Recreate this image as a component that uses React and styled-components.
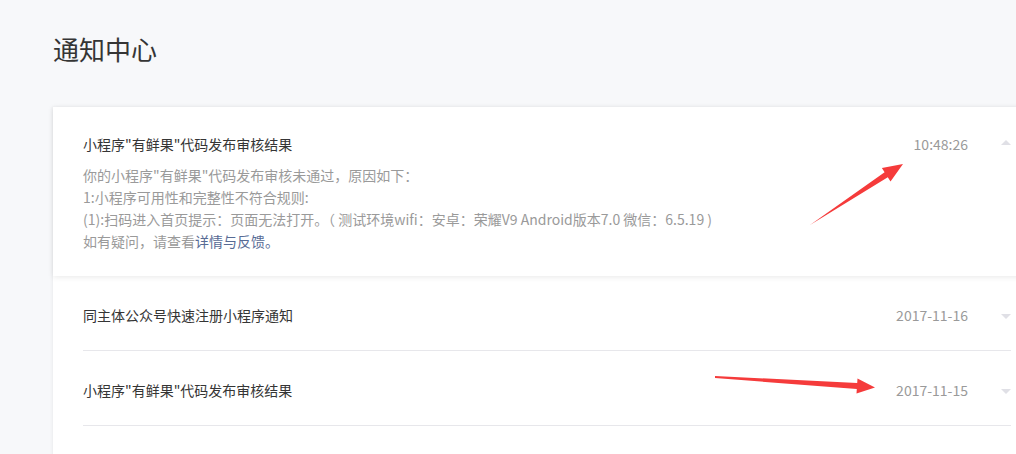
import React from "react";
import styled, { createGlobalStyle } from "styled-components";

const Global = createGlobalStyle`
  html, body { margin: 0; padding: 0; overflow: hidden; }
  body {
    background: #f7f8fa;
    font-family: "Noto Sans CJK SC", "Microsoft YaHei", sans-serif;
    -webkit-font-smoothing: antialiased;
  }
`;

const Page = styled.div`
  position: relative;
  width: 1016px;
  height: 454px;
  padding-left: 53px;
  box-sizing: border-box;
  overflow: hidden;
`;

const Title = styled.h1`
  margin: 0;
  padding-top: 33px;
  height: 107px;
  box-sizing: border-box;
  font-size: 26px;
  line-height: 32px;
  font-weight: 400;
  color: #353535;
`;

const Panel = styled.div`
  width: 1000px;
  min-height: 400px;
  background: #fff;
  box-shadow: -1px 0 3px rgba(0, 0, 0, 0.05);
`;

const Card = styled.div`
  padding: 26px 42px 24px 30px;
  box-shadow: 0 1px 6px rgba(0, 0, 0, 0.09);
  position: relative;
  z-index: 1;
`;

const Item = styled.div`
  padding: 0 42px 0 30px;
`;

const ItemInner = styled.div`
  padding: 28px 0 24px;
  border-bottom: 1px solid #e7e7eb;
`;

const Head = styled.div`
  display: flex;
  align-items: center;
  height: 22px;
`;

const ItemTitle = styled.div`
  flex: 1;
  font-size: 14px;
  line-height: 22px;
  color: #353535;
`;

const Time = styled.div`
  font-size: 14px;
  line-height: 22px;
  color: #9a9a9a;
  font-family: "Noto Sans CJK SC", sans-serif;
`;

const Caret = styled.span`
  width: 0;
  height: 0;
  margin-left: 33px;
  border-left: 5px solid transparent;
  border-right: 5px solid transparent;
  ${(p) =>
    p.$up
      ? "border-bottom: 5px solid #e0e0e6; margin-top: -4px;"
      : "border-top: 5px solid #e0e0e6; margin-top: 2px;"}
`;

const Body = styled.div`
  margin-top: 9px;
  font-size: 14px;
  line-height: 22px;
  color: #9a9a9a;
`;

const Link = styled.a`
  color: #576b95;
  text-decoration: none;
`;

const Overlay = styled.svg`
  position: absolute;
  left: 0;
  top: 0;
  pointer-events: none;
`;

export default function App() {
  return (
    <>
      <Global />
      <Page>
        <Title>通知中心</Title>
        <Panel>
          <Card>
            <Head>
              <ItemTitle>小程序"有鲜果"代码发布审核结果</ItemTitle>
              <Time>10:48:26</Time>
              <Caret $up />
            </Head>
            <Body>
              <div>你的小程序"有鲜果"代码发布审核未通过，原因如下：</div>
              <div>1:小程序可用性和完整性不符合规则:</div>
              <div>
                (1):扫码进入首页提示：页面无法打开。（ 测试环境wifi：安卓：荣耀V9 Android版本7.0 微信：6.5.19 )
              </div>
              <div>
                如有疑问，请查看<Link href="#">详情与反馈。</Link>
              </div>
            </Body>
          </Card>
          <Item>
            <ItemInner>
              <Head>
                <ItemTitle>同主体公众号快速注册小程序通知</ItemTitle>
                <Time>2017-11-16</Time>
                <Caret />
              </Head>
            </ItemInner>
          </Item>
          <Item>
            <ItemInner>
              <Head>
                <ItemTitle>小程序"有鲜果"代码发布审核结果</ItemTitle>
                <Time>2017-11-15</Time>
                <Caret />
              </Head>
            </ItemInner>
          </Item>
        </Panel>
        <Overlay width="1016" height="454" viewBox="0 0 1016 454">
          <polygon
            fill="#f53b3b"
            points="810,225 884.6,172.3 881.9,168.1 903,164 890.5,181.5 887.8,177.3"
          />
          <polygon
            fill="#f53b3b"
            points="715,376 857.2,383 857.5,378.5 875,387.5 856.5,393.5 856.8,389 715,378"
          />
        </Overlay>
      </Page>
    </>
  );
}
